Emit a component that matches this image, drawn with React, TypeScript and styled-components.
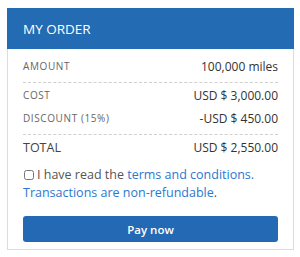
import React from 'react';
import styled, { createGlobalStyle } from 'styled-components';

const GlobalStyle = createGlobalStyle`
    html, body {
        margin: 0;
        padding: 0;
        background: #fff;
    }
    body {
        font-family: "Open Sans", "Liberation Sans", sans-serif;
    }
    * {
        box-sizing: border-box;
    }
`;

const Card = styled.div`
    width: 287px;
    margin: 8px 0 0 7px;
    border: 1px solid #dcdcdc;
    background: #fff;
`;

const Header = styled.div`
    height: 41px;
    margin: -1px -1px 0 -1px;
    background-color: #236bb3;
    color: #fff;
    font-size: 13.5px;
    display: flex;
    align-items: center;
    padding: 0 16px;
`;

const Body = styled.div`
    padding: 0 15px 7px;
`;

const Section = styled.div<{ $top: number; $dashed?: boolean }>`
    display: flex;
    flex-direction: column;
    gap: 5px;
    padding-top: ${(p) => p.$top}px;
    padding-bottom: ${(p) => (p.$dashed ? 7 : 0)}px;
    border-bottom: ${(p) => (p.$dashed ? '1px dashed #cfcfcf' : 'none')};
`;

const Row = styled.div`
    height: 18px;
    display: flex;
    align-items: center;
    justify-content: space-between;
`;

const Label = styled.span`
    font-size: 10px;
    letter-spacing: 0.6px;
    color: #666;
    text-transform: uppercase;
`;

const TotalLabel = styled.span`
    font-size: 12.5px;
    color: #444;
`;

const Value = styled.span`
    font-size: 12px;
    color: #333;
`;

const Terms = styled.label`
    display: block;
    margin-top: 10px;
    font-size: 12.5px;
    line-height: 18px;
    color: #555;
`;

const Check = styled.input`
    width: 10px;
    height: 10px;
    margin: 0 3px 0 1px;
    vertical-align: -1px;
`;

const Link = styled.a`
    color: #2a78cf;
    text-decoration: none;
`;

const PayButton = styled.button`
    display: block;
    width: 100%;
    height: 26px;
    margin-top: 14px;
    border: none;
    border-radius: 3px;
    background-color: #2369b3;
    color: #fff;
    font-family: "Open Sans", "Liberation Sans", sans-serif;
    font-size: 11.5px;
    font-weight: 600;
    cursor: pointer;
`;

const App: React.FC = () => {
    return (
        <>
            <GlobalStyle />
            <Card>
                <Header>MY ORDER</Header>
                <Body>
                    <Section $top={8} $dashed>
                        <Row>
                            <Label>Amount</Label>
                            <Value>100,000 miles</Value>
                        </Row>
                    </Section>
                    <Section $top={3} $dashed>
                        <Row>
                            <Label>Cost</Label>
                            <Value>USD $ 3,000.00</Value>
                        </Row>
                        <Row>
                            <Label>Discount (15%)</Label>
                            <Value>-USD $ 450.00</Value>
                        </Row>
                    </Section>
                    <Section $top={3}>
                        <Row>
                            <TotalLabel>TOTAL</TotalLabel>
                            <Value>USD $ 2,550.00</Value>
                        </Row>
                    </Section>
                    <Terms>
                        <Check type="checkbox" />I have read the <Link href="#">terms and conditions.</Link>{' '}
                        <Link href="#">Transactions are non-refundable</Link>.
                    </Terms>
                    <PayButton>Pay now</PayButton>
                </Body>
            </Card>
        </>
    );
};

export default App;
